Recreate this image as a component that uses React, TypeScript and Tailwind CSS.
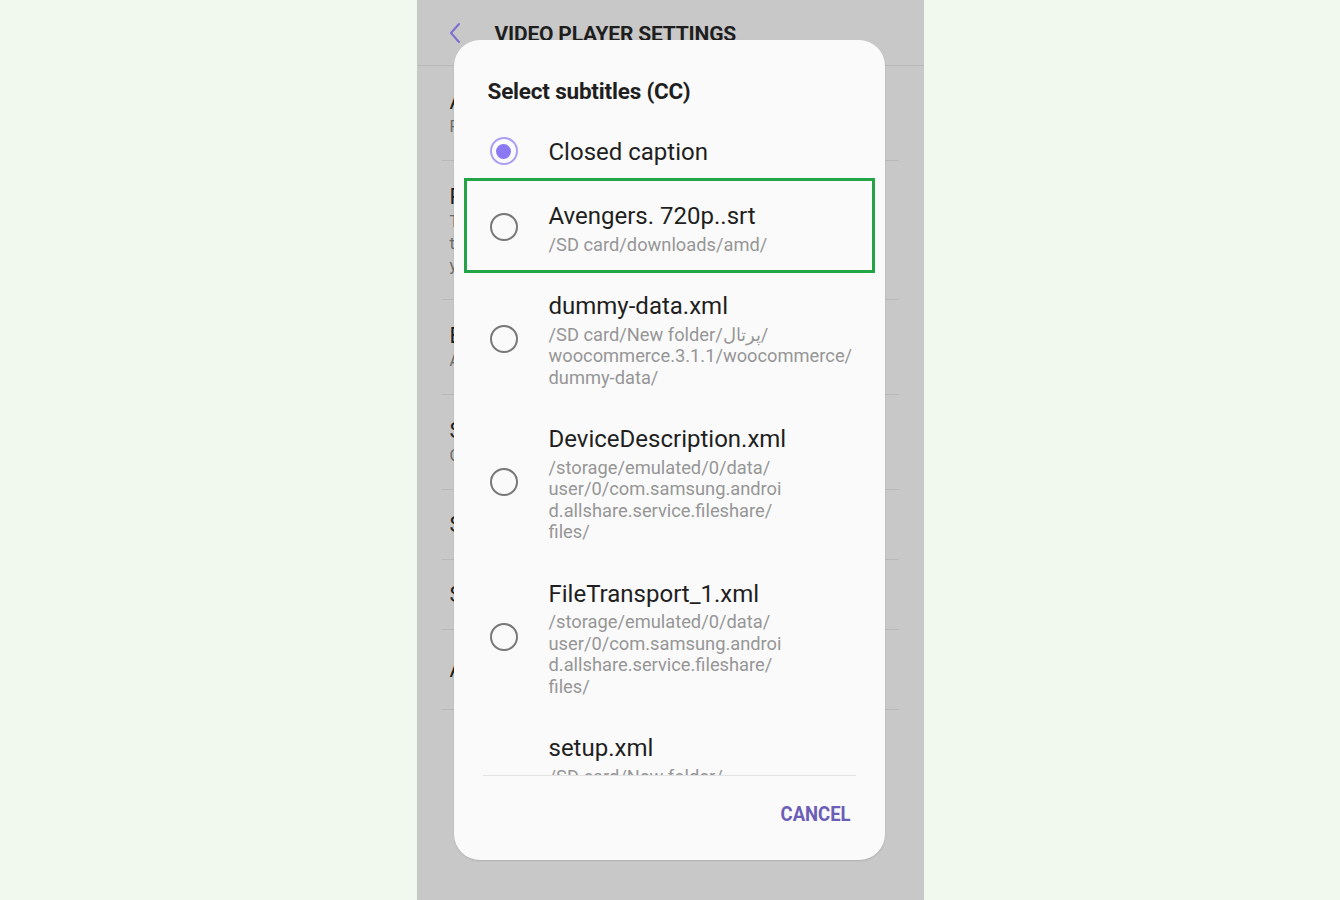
import React from 'react'

type Item = {
  title: string
  lines: string[]
  highlight?: boolean
}

const items: Item[] = [
  { title: 'Avengers. 720p..srt', lines: ['/SD card/downloads/amd/'], highlight: true },
  {
    title: 'dummy-data.xml',
    lines: ['/SD card/New folder/پرتال/', 'woocommerce.3.1.1/woocommerce/', 'dummy-data/'],
  },
  {
    title: 'DeviceDescription.xml',
    lines: ['/storage/emulated/0/data/', 'user/0/com.samsung.androi', 'd.allshare.service.fileshare/', 'files/'],
  },
  {
    title: 'FileTransport_1.xml',
    lines: ['/storage/emulated/0/data/', 'user/0/com.samsung.androi', 'd.allshare.service.fileshare/', 'files/'],
  },
  {
    title: 'setup.xml',
    lines: ['/SD card/New folder/', 'پرتال/woocommerce.3.1.1/', 'woocommerce/includes/', 'admin/views/', 'html-admin-setup/'],
  },
]

// settings rows behind the dimmed dialog
const settings = [
  { title: 'Auto play next', sub: ['Play the next video automatically'], h: 'h-[95px]' },
  { title: 'Play videos in pop-up view', sub: ['Tap the pop-up button', 'to keep watching while', 'you use other apps'], h: 'h-[139px]' },
  { title: 'Brightness', sub: ['Adjust automatically'], h: 'h-[95px]' },
  { title: 'Subtitles', sub: ['Off'], h: 'h-[95px]' },
  { title: 'Sound effects', sub: [], h: 'h-[70px]' },
  { title: 'Speed', sub: [], h: 'h-[70px]' },
  { title: 'About Video Player', sub: [], h: 'h-[80px]' },
]

const Radio = ({ checked }: { checked?: boolean }) =>
  checked ? (
    <span className="w-[28px] h-[28px] shrink-0 rounded-full border-[2px] border-[#ab9ff4] flex items-center justify-center">
      <span className="w-[15px] h-[15px] rounded-full bg-[#8a79f2]" />
    </span>
  ) : (
    <span className="w-[28px] h-[28px] shrink-0 rounded-full border-[2px] border-[#787878]" />
  )

const App = () => {
  return (
    <div className="min-h-screen w-full bg-[#f1f8ee] flex justify-center font-['Roboto',sans-serif]">
      <div className="relative w-[507px] h-[900px] bg-[#c8c8c8] overflow-hidden">
        {/* Header */}
        <div className="h-[66px] border-b border-[#b9b9b9] flex items-center">
          <svg className="ml-[31px] w-[14px] h-[22px]" viewBox="0 0 14 22" fill="none">
            <polyline points="11,2 3,11 11,20" stroke="#7b6ed0" strokeWidth="2" strokeLinecap="round" strokeLinejoin="round" />
          </svg>
          <span className="ml-[33px] mt-[4px] text-[21px] font-bold tracking-[-0.2px] text-[#1e1e1e] whitespace-nowrap">
            VIDEO PLAYER SETTINGS
          </span>
        </div>

        {/* Settings list */}
        <div className="px-[25px]">
          {settings.map((s) => (
            <div key={s.title} className={`${s.h} border-b border-[#b9b9b9] flex flex-col justify-center pl-[8px]`}>
              <div className="text-[22px] leading-[28px] text-[#1e1e1e] whitespace-nowrap">{s.title}</div>
              {s.sub.map((l) => (
                <div key={l} className="text-[16px] leading-[22px] text-[#6a6a6a] whitespace-nowrap">{l}</div>
              ))}
            </div>
          ))}
        </div>

        {/* Dialog */}
        <div className="absolute left-[37px] top-[40px] w-[431px] h-[820px] rounded-[26px] bg-[#fafafa] flex flex-col shadow-[0_1px_2px_rgba(0,0,0,0.12)]">
          <div className="pt-[36px] pl-[34px] mb-[14px] h-[66px]">
            <span className="block text-[22.5px] leading-[30px] font-bold text-[#1f1f1f] tracking-[-0.2px] whitespace-nowrap">
              Select subtitles (CC)
            </span>
          </div>

          <div className="flex-1 overflow-hidden">
            <div className="h-[62px] flex items-center pl-[36px] gap-[31px]">
              <Radio checked />
              <span className="text-[24px] leading-[30px] text-[#1f1f1f] mt-[2px]">Closed caption</span>
            </div>

            {items.map((it) => (
              <div key={it.title} className="relative py-[17px] flex items-center pl-[36px] gap-[31px]">
                <Radio />
                <div className="flex flex-col">
                  <span className="text-[24px] leading-[34.5px] text-[#1f1f1f] whitespace-nowrap">{it.title}</span>
                  {it.lines.map((l, i) => (
                    <span key={i} className="text-[18.3px] leading-[21.5px] text-[#969696] whitespace-nowrap">
                      {l}
                    </span>
                  ))}
                </div>
                {it.highlight && (
                  <div className="absolute -top-[4px] -bottom-[1px] left-[10px] right-[10px] border-[3px] border-[#22a447]" />
                )}
              </div>
            ))}
          </div>

          <div className="mx-[29px] border-t border-[#e3e3e3]" />

          <div className="h-[84px] flex justify-end items-start pt-[26px] pr-[34px]">
            <span className="text-[21px] leading-[24px] font-bold text-[#6b5eb6] scale-x-[0.88] origin-right">CANCEL</span>
          </div>
        </div>
      </div>
    </div>
  )
}

export default App
